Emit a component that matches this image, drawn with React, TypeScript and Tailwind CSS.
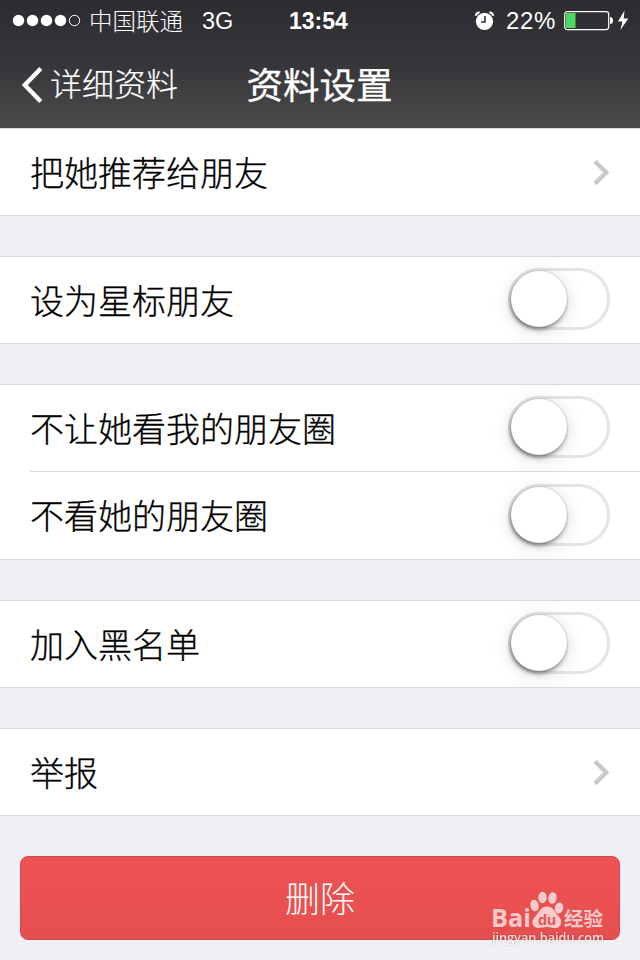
import { useState } from "react";
import clsx from "clsx";

interface SettingItem {
  id: string;
  label: string;
  type: "link" | "switch";
}

const groups: SettingItem[][] = [
  [{ id: "recommend", label: "把她推荐给朋友", type: "link" }],
  [{ id: "star", label: "设为星标朋友", type: "switch" }],
  [
    { id: "hideMine", label: "不让她看我的朋友圈", type: "switch" },
    { id: "hideHers", label: "不看她的朋友圈", type: "switch" },
  ],
  [{ id: "block", label: "加入黑名单", type: "switch" }],
  [{ id: "report", label: "举报", type: "link" }],
];

function StatusBar() {
  return (
    <div className="flex h-[42px] items-center pl-3 pr-2.5">
      <svg width="70" height="14" viewBox="0 0 70 14" fill="#fff">
        <circle cx="6.5" cy="6.5" r="5.7" />
        <circle cx="20.5" cy="6.5" r="5.7" />
        <circle cx="34.5" cy="6.5" r="5.7" />
        <circle cx="48.5" cy="6.5" r="5.7" />
        <circle cx="62.5" cy="6.5" r="5.2" fill="none" stroke="#fff" />
      </svg>
      <span className="ml-[7px] w-[113px] pt-[3px] text-[23.5px] font-light">中国联通</span>
      <span className="w-[87px] pt-px text-[23.5px]">3G</span>
      <span className="w-[185px] text-[23px] font-bold">13:54</span>
      <svg width="22" height="20" viewBox="0 0 22 20">
        <circle cx="10.5" cy="10.3" r="8.6" fill="#fff" />
        <path d="M1.6 4.8Q2.4 1.8 5.6 1.3M15.4 1.3Q18.6 1.8 19.4 4.8" fill="none" stroke="#fff" strokeWidth="1.9" />
        <path d="M11 5v6H7" fill="none" stroke="#343338" strokeWidth="1.6" />
      </svg>
      <span className="ml-2.5 w-[58px] text-[24px] tracking-[0.6px]">22%</span>
      <svg width="66" height="22" viewBox="0 0 66 22">
        <rect x="0.7" y="1.6" width="44" height="18" rx="2.5" fill="none" stroke="#fff" strokeWidth="1.2" />
        <rect x="2" y="3" width="9.5" height="15" fill="#4cd964" />
        <path d="M46 7q3 0 3 3.5t-3 3.5z" fill="#fff" />
        <path d="M60.5 0.5L54 11.5h4.4l-2 8.5L64.3 8.5h-4.6z" fill="#fff" />
      </svg>
    </div>
  );
}

function Header() {
  return (
    <header className="h-32 bg-linear-to-b from-[#2d2c31] via-[#363539] to-[#4b4b4c] text-white">
      <StatusBar />
      <div className="relative flex h-[86px] items-center justify-center">
        <button className="absolute left-5 top-0 flex h-[84px] items-center">
          <svg width="24" height="38" viewBox="0 0 24 38" fill="none" stroke="#fff" strokeWidth="4.4">
            <path d="M20.8 3.5L4.8 20L20.8 36.5" />
          </svg>
          <span className="ml-1.5 pt-0.5 text-[32px] font-light [-webkit-text-stroke:0.2px]">详细资料</span>
        </button>
        <h1 className="pr-px pt-[5px] text-[36.5px] font-normal [-webkit-text-stroke:0.3px]">资料设置</h1>
      </div>
    </header>
  );
}

function Switch({ checked, onChange }: { checked: boolean; onChange: () => void }) {
  return (
    <button
      role="switch"
      aria-checked={checked}
      onClick={onChange}
      className={clsx(
        "mb-0.5 flex h-[62px] w-[102px] items-center rounded-full border-[3px] transition-colors",
        checked ? "justify-end border-[#4cd964] bg-[#4cd964]" : "border-[#e5e5e5] bg-white"
      )}
    >
      <span className="size-14 rounded-full bg-white shadow-[0_0_1px_1px_rgba(0,0,0,0.1),-1px_3px_4px_rgba(0,0,0,0.36),0_4px_20px_rgba(0,0,0,0.14)]" />
    </button>
  );
}

function Chevron() {
  return (
    <svg width="18" height="26" viewBox="0 0 18 26" fill="none" stroke="#c7c7cc" strokeWidth="4.4">
      <path d="M3 2.5L14.3 13.5L3 24.5" />
    </svg>
  );
}

// Baidu Jingyan badge in the bottom right corner
function Watermark() {
  return (
    <div className="pointer-events-none absolute left-[490px] top-[890px] h-[58px] w-[116px]">
      <svg width="116" height="58" viewBox="0 0 116 58" fill="#fff" fillOpacity="0.7">
        <ellipse cx="44.5" cy="15.5" rx="4.2" ry="5.8" transform="rotate(-12 44.5 15.5)" />
        <ellipse cx="52.5" cy="7.5" rx="4.2" ry="5.8" />
        <ellipse cx="62.5" cy="8" rx="4.2" ry="5.8" transform="rotate(8 62.5 8)" />
        <ellipse cx="69" cy="18" rx="4.2" ry="5.6" transform="rotate(12 69 18)" />
        <path d="M57 16.5C50 16.5 49 23 45.5 26C40 31 42 37.5 48 38C52 38 54 37 57 37C61 37 64 39 68 37.5C72.5 35 72 29.5 68.5 26C64 22 64 16.5 57 16.5Z" />
        <text x="1" y="37" fontSize="25.5" fontWeight="700" textLength="40" lengthAdjust="spacingAndGlyphs" fontFamily="Open Sans, sans-serif">Bai</text>
        <text x="48" y="35" fontSize="15.5" fontWeight="700" fill="#eb5051" fillOpacity="1" textLength="18" lengthAdjust="spacingAndGlyphs" fontFamily="Liberation Sans, sans-serif">du</text>
        <text x="74" y="35.5" fontSize="19.5" fontWeight="700" textLength="39" lengthAdjust="spacingAndGlyphs" fontFamily="Noto Sans CJK SC, sans-serif">经验</text>
        <text x="2" y="51.5" fontSize="13" fontWeight="600" fillOpacity="0.8" textLength="112" lengthAdjust="spacingAndGlyphs" style={{ filter: "drop-shadow(0 0 1px rgba(0,0,0,.25))" }} fontFamily="Open Sans, sans-serif">jingyan.baidu.com</text>
      </svg>
    </div>
  );
}

export default function App() {
  const [enabled, setEnabled] = useState<Record<string, boolean>>({});

  const toggle = (id: string) => {
    setEnabled({ ...enabled, [id]: !enabled[id] });
  };

  return (
    <div className="relative h-[960px] w-[640px] overflow-hidden bg-[#efeff4] font-['Liberation_Sans','Noto_Sans_CJK_SC',sans-serif] leading-none text-black">
      <Header />
      <main className="flex flex-col gap-10">
        {groups.map((items) => (
          <section key={items[0].id} className="border-y border-[#d9d9db] bg-white pl-[30px]">
            {items.map((item, i) => (
              <div
                key={item.id}
                className={clsx(
                  "flex items-center justify-between pr-[30px]",
                  items.length === 1 ? "h-[86px]" : "h-[87px]",
                  i < items.length - 1 && "border-b border-[#d9d9db]"
                )}
              >
                <span className="pt-[3px] text-[34px] font-light [-webkit-text-stroke:0.3px]">{item.label}</span>
                {item.type === "link" ? (
                  <Chevron />
                ) : (
                  <Switch checked={!!enabled[item.id]} onChange={() => toggle(item.id)} />
                )}
              </div>
            ))}
          </section>
        ))}
        <button className="mx-5 h-[84px] rounded-lg border border-[#c94a4c] bg-linear-to-b from-[#ee5253] to-[#e64f4f] pt-0.5 text-[35px] font-light text-white">
          删除
        </button>
      </main>
      <Watermark />
    </div>
  );
}
